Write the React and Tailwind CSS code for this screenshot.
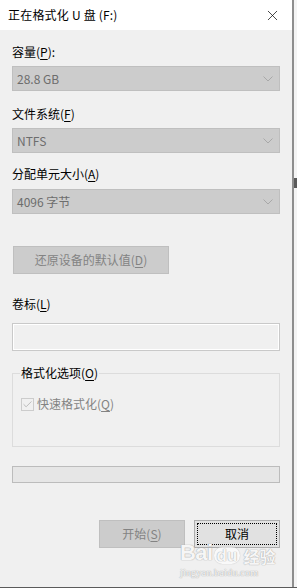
import { X, Check } from 'lucide-react'

const FONT = { fontFamily: '"Noto Sans CJK SC", "Noto Sans", sans-serif' }

function U({ children }) {
  return <span className="underline underline-offset-2 decoration-1">{children}</span>
}

function Combo({ value }) {
  return (
    <div className="w-[268px] h-[25px] bg-[#cccccc] border border-[#bfbfbf] flex items-center justify-between pl-[4px] pr-[5px]">
      <span className="text-[12px] leading-4 text-[#6d6d6d]">{value}</span>
      <svg width="10" height="6" viewBox="0 0 10 6" className="mr-[1px]">
        <path d="M0.5 0.5 L5 5 L9.5 0.5" fill="none" stroke="#a8a8a8" strokeWidth="1" />
      </svg>
    </div>
  )
}

export default function App() {
  return (
    <div className="relative w-[297px] h-[588px] bg-[#f4f4f4] overflow-hidden text-black" style={FONT}>
      <div className="w-[294px] h-[587px] flex flex-col bg-[#f0f0f0] border-r-2 border-[#8e8e8e]">
        {/* Title bar */}
        <div className="h-[30px] bg-white flex items-center justify-between pl-[8px] pr-[11px] shrink-0">
          <span className="text-[12px] leading-4 tracking-[0.2px]">正在格式化 U 盘 (F:)</span>
          <X className="w-[17px] h-[17px]" strokeWidth={1} />
        </div>

        <div className="flex flex-col pl-[12px]">
          <div className="mt-[14px] text-[12px] leading-4">容量(<U>P</U>):</div>
          <div className="mt-[6px]"><Combo value="28.8 GB" /></div>

          <div className="mt-[15px] text-[12px] leading-4">文件系统(<U>F</U>)</div>
          <div className="mt-[6px]"><Combo value="NTFS" /></div>

          <div className="mt-[13px] text-[12px] leading-4">分配单元大小(<U>A</U>)</div>
          <div className="mt-[7px]"><Combo value="4096 字节" /></div>

          <div className="mt-[32px] ml-[1px] w-[156px] h-[28px] bg-[#cccccc] border border-[#bfbfbf] flex items-center justify-center text-[12px] leading-4 text-[#838383]">
            还原设备的默认值(<U>D</U>)
          </div>

          <div className="mt-[22px] text-[12px] leading-4">卷标(<U>L</U>)</div>
          <div className="mt-[11px] w-[268px] h-[28px] border border-[#c9c9c9] bg-[#f0f0f0] shadow-[inset_0_0_0_1px_#ffffff]" />

          {/* Group box */}
          <div className="relative mt-[22px] w-[268px] h-[74px] border border-[#dcdcdc]">
            <span className="absolute left-[7px] top-[-9px] bg-[#f0f0f0] px-[1px] text-[12px] leading-4">
              格式化选项(<U>O</U>)
            </span>
            <div className="flex items-center gap-[3px] mt-[22px] ml-[8px]">
              <div className="w-[13px] h-[13px] border border-[#cccccc] bg-[#f0f0f0] flex items-center justify-center">
                <Check className="w-[11px] h-[11px] text-[#a8a8a8]" strokeWidth={1.6} />
              </div>
              <span className="text-[12px] leading-4 text-[#838383]">快速格式化(<U>Q</U>)</span>
            </div>
          </div>

          {/* Progress */}
          <div className="mt-[19px] w-[268px] h-[17px] bg-[#e6e6e6] border border-[#bcbcbc]" />

          {/* Buttons */}
          <div className="mt-[37px] w-[268px] flex justify-end gap-[9px]">
            <div className="w-[86px] h-[28px] bg-[#cccccc] border border-[#bfbfbf] flex items-center justify-center text-[12px] leading-4 text-[#838383]">
              开始(<U>S</U>)
            </div>
            <div className="w-[86px] h-[28px] bg-[#e1e1e1] border border-[#adadad] p-[2px]">
              <div className="w-full h-full border border-dotted border-black flex items-center justify-center text-[12px] leading-4">
                取消
              </div>
            </div>
          </div>
        </div>
      </div>
      <div className="absolute left-0 bottom-0 w-full h-[1px] bg-[#5a5a5a]" />
      <div className="absolute right-0 top-[178px] w-[3px] h-[10px] bg-[#5a5a5a]" />

      {/* Watermark */}
      <div className="absolute left-[180px] top-[542px] flex flex-col items-start text-white/90 [text-shadow:0_0_1px_#a8a8a8,0_0_1px_#a8a8a8] pointer-events-none">
        <div className="flex items-end leading-none">
          <span className="text-[22px] font-bold tracking-tight" style={{ fontFamily: '"Liberation Sans", sans-serif' }}>Bai</span>
          <span className="ml-[1px] text-[17px] font-bold rounded-full px-[3px] bg-white/60 shadow-[0_0_1px_#a8a8a8]" style={{ fontFamily: '"Liberation Sans", sans-serif' }}>du</span>
          <span className="ml-[3px] text-[16px] font-bold">经验</span>
        </div>
        <span className="mt-[3px] text-[10.5px] leading-3" style={{ fontFamily: '"Liberation Serif", serif' }}>jingyan.baidu.com</span>
      </div>
    </div>
  )
}
